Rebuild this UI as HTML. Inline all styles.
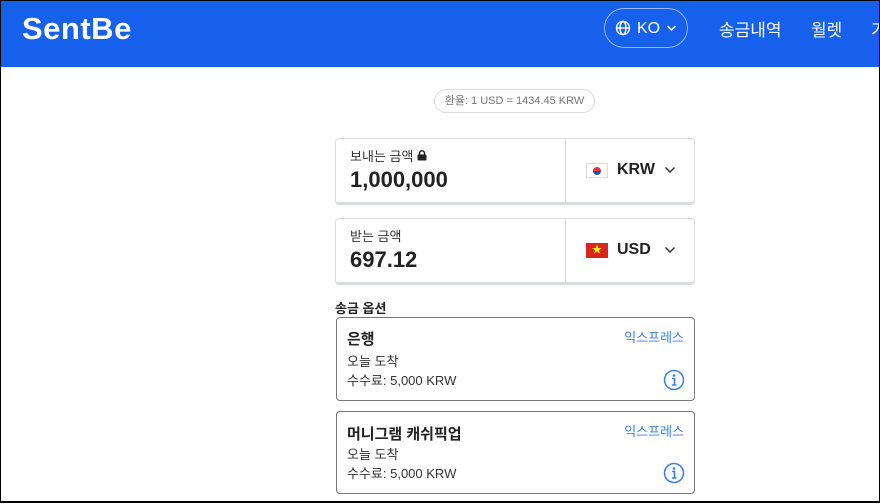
<!DOCTYPE html><html><head><meta charset="utf-8"><style>
*{box-sizing:border-box;margin:0;padding:0}
body{width:880px;height:504px;overflow:hidden;background:#fff;font-family:"Liberation Sans","Noto Sans CJK KR",sans-serif;color:#222;position:relative}
.frame{position:absolute;left:0;top:0;width:880px;height:503px;border:1px solid #000;border-bottom:2px solid #000;pointer-events:none;z-index:5}
.hdr{position:absolute;left:0;top:0;width:880px;height:67px;background:#1660eb;color:#fff}
.logo{position:absolute;left:22px;top:11px;font-size:31px;font-weight:bold;letter-spacing:0.5px}
.ko{position:absolute;left:604px;top:8px;width:84px;height:40px;border:1px solid rgba(255,255,255,.55);border-radius:20px;font-size:16px;display:flex;align-items:center;justify-content:center;gap:6px;line-height:1}
.nav{position:absolute;top:16px;font-size:17px}
.rate{position:absolute;left:434px;top:89px;width:161px;height:24px;border:1px solid #ddd;border-radius:12px;font-size:11px;color:#777;text-align:center;line-height:22px}
.box{position:absolute;left:335px;width:360px;height:67px;border:1px solid #ddd;border-bottom:3px solid #d9dbe3;border-radius:4px}
.box .div{position:absolute;left:229px;top:0;bottom:0;width:1px;background:#ddd}
.lbl{position:absolute;left:14px;top:7px;font-size:13px;color:#333}
.amt{position:absolute;left:14px;top:28px;font-size:22px;font-weight:bold;color:#222}
.cur{position:absolute;left:250px;top:22px;font-size:16px;font-weight:bold;display:flex;align-items:center}
.flag{width:22px;height:15px;margin-right:9px;position:relative}
.chev{position:absolute;left:328px;top:27px}
.opt{position:absolute;left:336px;width:359px;border:1px solid #777;border-radius:4px}
.opt .t{position:absolute;left:10px;font-size:15px;font-weight:bold}
.opt .s{position:absolute;left:10px;font-size:13px;color:#333}
.opt .x{position:absolute;right:10px;top:9px;font-size:13px;color:#3b7de8}
.opt svg{position:absolute;right:9px}
</style></head><body>
<div class="hdr">
<div class="logo">SentBe</div>
<div class="ko"><svg width="16" height="16" viewBox="0 0 16 16" fill="none" stroke="#fff" stroke-width="1.4"><circle cx="8" cy="8" r="6.5"/><ellipse cx="8" cy="8" rx="3" ry="6.5"/><path d="M1.5 8h13"/></svg><span style="margin-top:2px">KO</span><svg width="11" height="8" viewBox="0 0 11 8" fill="none" stroke="#fff" stroke-width="1.5"><path d="M1.5 2l4 4 4-4"/></svg></div>
<div class="nav" style="left:719px">송금내역</div>
<div class="nav" style="left:811px">월렛</div>
<div class="nav" style="left:871px">가</div>
</div>
<div class="rate">환율: 1 USD = 1434.45 KRW</div>
<div class="box" style="top:138px"><div class="lbl">보내는 금액 <svg width="10" height="11" viewBox="0 0 10 11"><rect x="0.5" y="4.5" width="9" height="6" rx="1" fill="#222"/><path d="M2.5 5V3.3a2.5 2.5 0 015 0V5" fill="none" stroke="#222" stroke-width="1.5"/></svg></div><div class="amt">1,000,000</div><div class="div"></div>
<div class="cur"><div class="flag" style="background:#fff;border:1px solid #ddd"><div style="position:absolute;left:6px;top:3px;width:8px;height:8px;border-radius:50%;background:linear-gradient(#e33 50%,#2552a5 50%)"></div></div>KRW</div>
<svg class="chev" width="12" height="8" viewBox="0 0 12 8" fill="none" stroke="#333" stroke-width="1.5"><path d="M1.5 1.5l4.5 4.5 4.5-4.5"/></svg></div>
<div class="box" style="top:218px"><div class="lbl">받는 금액</div><div class="amt">697.12</div><div class="div"></div>
<div class="cur"><div class="flag" style="background:#da251d;color:#ff0;font-size:10px;text-align:center;line-height:15px">★</div>USD</div>
<svg class="chev" width="12" height="8" viewBox="0 0 12 8" fill="none" stroke="#333" stroke-width="1.5"><path d="M1.5 1.5l4.5 4.5 4.5-4.5"/></svg></div>
<div style="position:absolute;left:335px;top:298px;font-size:13px;font-weight:bold">송금 옵션</div>
<div class="opt" style="top:317px;height:84px"><div class="t" style="top:10px">은행</div><div class="x">익스프레스</div><div class="s" style="top:33px">오늘 도착</div><div class="s" style="top:52px">수수료: 5,000 KRW</div>
<svg style="top:51px" width="22" height="22" viewBox="0 0 22 22"><circle cx="11" cy="11" r="9.5" fill="none" stroke="#3b7de8" stroke-width="1.5"/><circle cx="11" cy="6.5" r="1.3" fill="#3b7de8"/><path d="M9 9.5h2.5v6.5M9 16h4.5" stroke="#3b7de8" stroke-width="1.6" fill="none"/></svg></div>
<div class="opt" style="top:411px;height:83px"><div class="t" style="top:11px">머니그램 캐쉬픽업</div><div class="x">익스프레스</div><div class="s" style="top:32px">오늘 도착</div><div class="s" style="top:51px">수수료: 5,000 KRW</div>
<svg style="top:50px" width="22" height="22" viewBox="0 0 22 22"><circle cx="11" cy="11" r="9.5" fill="none" stroke="#3b7de8" stroke-width="1.5"/><circle cx="11" cy="6.5" r="1.3" fill="#3b7de8"/><path d="M9 9.5h2.5v6.5M9 16h4.5" stroke="#3b7de8" stroke-width="1.6" fill="none"/></svg></div>
<div class="frame"></div>
</body></html>
